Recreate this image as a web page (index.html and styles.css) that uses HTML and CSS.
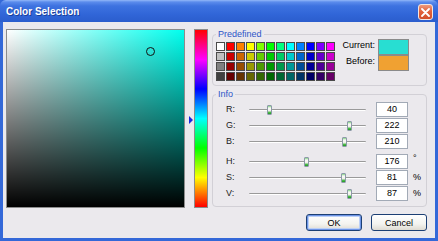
FILE: index.html
```html
<!DOCTYPE html>
<html lang="en">
<head>
	<meta charset="utf-8">
	<title>Color Selection</title>
	<link rel="stylesheet" href="styles.css">
</head>
<body>
	<div class="window">
		<div class="titlebar">
			<span class="title">Color Selection</span>
			<button class="close" aria-label="Close">
				<svg width="9" height="9" viewBox="0 0 9 9"><path d="M1 1L8 8M8 1L1 8" stroke="#fff" stroke-width="1.8" stroke-linecap="round"/></svg>
			</button>
		</div>
		<div class="client">
			<div class="sv">
				<span class="sv-cursor" style="left:81%;top:12%"></span>
			</div>
			<div class="hue">
				<div class="hue-track">
					<span class="hue-arrow" style="top:51%"></span>
				</div>
				<div class="hue-bar"></div>
			</div>
			<div class="side">
				<fieldset class="group predefined">
					<legend>Predefined</legend>
					<div class="group-body">
						<div class="palette">
							<span class="swatch" style="background:#ffffff"></span>
							<span class="swatch" style="background:#ff0000"></span>
							<span class="swatch" style="background:#ff8000"></span>
							<span class="swatch" style="background:#ffff00"></span>
							<span class="swatch" style="background:#80ff00"></span>
							<span class="swatch" style="background:#00ff00"></span>
							<span class="swatch" style="background:#00ff80"></span>
							<span class="swatch" style="background:#00ffff"></span>
							<span class="swatch" style="background:#0080ff"></span>
							<span class="swatch" style="background:#0000ff"></span>
							<span class="swatch" style="background:#8000ff"></span>
							<span class="swatch" style="background:#ff00ff"></span>

							<span class="swatch" style="background:#c0c0c0"></span>
							<span class="swatch" style="background:#cc0000"></span>
							<span class="swatch" style="background:#cc6600"></span>
							<span class="swatch" style="background:#cccc00"></span>
							<span class="swatch" style="background:#66cc00"></span>
							<span class="swatch" style="background:#00cc00"></span>
							<span class="swatch" style="background:#00cc66"></span>
							<span class="swatch" style="background:#00cccc"></span>
							<span class="swatch" style="background:#0066cc"></span>
							<span class="swatch" style="background:#0000cc"></span>
							<span class="swatch" style="background:#6600cc"></span>
							<span class="swatch" style="background:#cc00cc"></span>

							<span class="swatch" style="background:#808080"></span>
							<span class="swatch" style="background:#990000"></span>
							<span class="swatch" style="background:#994d00"></span>
							<span class="swatch" style="background:#999900"></span>
							<span class="swatch" style="background:#4d9900"></span>
							<span class="swatch" style="background:#009900"></span>
							<span class="swatch" style="background:#00994d"></span>
							<span class="swatch" style="background:#009999"></span>
							<span class="swatch" style="background:#004d99"></span>
							<span class="swatch" style="background:#000099"></span>
							<span class="swatch" style="background:#4d0099"></span>
							<span class="swatch" style="background:#990099"></span>

							<span class="swatch" style="background:#404040"></span>
							<span class="swatch" style="background:#660000"></span>
							<span class="swatch" style="background:#663300"></span>
							<span class="swatch" style="background:#666600"></span>
							<span class="swatch" style="background:#336600"></span>
							<span class="swatch" style="background:#006600"></span>
							<span class="swatch" style="background:#006633"></span>
							<span class="swatch" style="background:#006666"></span>
							<span class="swatch" style="background:#003366"></span>
							<span class="swatch" style="background:#000066"></span>
							<span class="swatch" style="background:#330066"></span>
							<span class="swatch" style="background:#660066"></span>
						</div>
						<div class="compare">
							<span class="compare-label">Current:</span>
							<span class="compare-swatch current"></span>
							<span class="compare-label">Before:</span>
							<span class="compare-swatch before"></span>
						</div>
					</div>
				</fieldset>

				<fieldset class="group info">
					<legend>Info</legend>
					<div class="channels">
						<div class="channel">
							<span class="channel-label">R:</span>
							<div class="slider"><div class="slider-range"><span class="thumb" style="left:15.7%"></span></div></div>
							<span class="value">40</span>
							<span class="unit"></span>
						</div>
						<div class="channel">
							<span class="channel-label">G:</span>
							<div class="slider"><div class="slider-range"><span class="thumb" style="left:87.1%"></span></div></div>
							<span class="value">222</span>
							<span class="unit"></span>
						</div>
						<div class="channel">
							<span class="channel-label">B:</span>
							<div class="slider"><div class="slider-range"><span class="thumb" style="left:82.4%"></span></div></div>
							<span class="value">210</span>
							<span class="unit"></span>
						</div>
					</div>
					<div class="channels">
						<div class="channel">
							<span class="channel-label">H:</span>
							<div class="slider"><div class="slider-range"><span class="thumb" style="left:48.9%"></span></div></div>
							<span class="value">176</span>
							<span class="unit unit-deg">°</span>
						</div>
						<div class="channel">
							<span class="channel-label">S:</span>
							<div class="slider"><div class="slider-range"><span class="thumb" style="left:81%"></span></div></div>
							<span class="value">81</span>
							<span class="unit">%</span>
						</div>
						<div class="channel">
							<span class="channel-label">V:</span>
							<div class="slider"><div class="slider-range"><span class="thumb" style="left:87%"></span></div></div>
							<span class="value">87</span>
							<span class="unit">%</span>
						</div>
					</div>
				</fieldset>

				<div class="actions">
					<button class="btn btn-default">OK</button>
					<button class="btn">Cancel</button>
				</div>
			</div>
		</div>
	</div>
</body>
</html>
```

FILE: styles.css
```css
html, body {
	margin: 0;
	padding: 0;
}

body {
	width: 438px;
	height: 241px;
	overflow: hidden;
	font-family: 'Liberation Sans', Arial, sans-serif;
	font-size: 9px;
	color: #000;
}

.window {
	width: 438px;
	height: 241px;
	display: flex;
	flex-direction: column;
	background: #3468d8;
}

/* title bar */
.titlebar {
	height: 22px;
	flex: none;
	display: flex;
	align-items: center;
	justify-content: space-between;
	padding: 0 5px 0 6px;
	box-sizing: border-box;
	background: linear-gradient(to bottom, #93b7f8 0, #5b8cec 2px, #3d72e0 6px, #3166d8 14px, #2b5dcd 22px);
	border-radius: 6px 6px 0 0;
}

.title {
	color: #fff;
	font-weight: bold;
	font-size: 10px;
	text-shadow: 1px 1px 0 #1b3f9a;
	margin-top: 1px;
}

.close {
	width: 15px;
	height: 16px;
	margin-top: 2px;
	padding: 0;
	display: flex;
	align-items: center;
	justify-content: center;
	border: 1px solid #f4e6e0;
	border-radius: 3px;
	background: linear-gradient(to bottom, #ef9a7c 0, #e2623c 45%, #d24e2a 100%);
}

/* client area */
.client {
	flex: 1;
	margin: 0 3px 3px;
	display: flex;
	align-items: flex-start;
	padding: 7px 8px 0 3px;
	background: #ebe9ed;
}

.sv {
	position: relative;
	width: 179px;
	height: 179px;
	box-sizing: border-box;
	border: 1px solid #8c8c8c;
	background:
		linear-gradient(to top, #000, rgba(0, 0, 0, 0)),
		linear-gradient(to right, #fff, #00ffee);
	overflow: hidden;
}

.sv-cursor {
	position: absolute;
	width: 7px;
	height: 7px;
	margin: -4px 0 0 -4px;
	border: 1px solid #111;
	border-radius: 50%;
}

.hue {
	display: flex;
	margin-left: 3px;
}

.hue-track {
	position: relative;
	width: 6px;
	height: 179px;
}

.hue-arrow {
	position: absolute;
	left: 1px;
	margin-top: -4px;
	width: 0;
	height: 0;
	border-top: 4px solid transparent;
	border-bottom: 4px solid transparent;
	border-left: 4px solid #1626e0;
}

.hue-bar {
	width: 14px;
	height: 179px;
	box-sizing: border-box;
	border: 1px solid #8c8c8c;
	background: linear-gradient(to bottom, #f00, #f0f, #00f, #0ff, #0f0, #ff0, #f00);
}

/* right column */
.side {
	width: 215px;
	margin-left: 4px;
	display: flex;
	flex-direction: column;
}

.group {
	margin: 0;
	padding: 0 0 4px 3px;
	border: 1px solid #d2d0d6;
	border-radius: 4px;
	min-width: 0;
}

.group legend {
	padding: 0 2px;
	font-size: 9px;
	line-height: 10px;
	color: #2d55c8;
}

.group-body {
	display: flex;
	align-items: flex-start;
}

.palette {
	margin-top: 3px;
	display: grid;
	grid-template-columns: repeat(12, 9px);
	grid-auto-rows: 9px;
	gap: 1px;
}

.swatch {
	box-sizing: border-box;
	border: 1px solid #4a4a4a;
}

.compare {
	margin-left: 7px;
	display: grid;
	grid-template-columns: 33px 31px;
	grid-auto-rows: 16px;
	column-gap: 3px;
}

.compare-label {
	text-align: right;
	line-height: 13px;
}

.compare-swatch {
	box-sizing: border-box;
	border: 1px solid #8a8a8a;
}

.current {
	background: rgb(40, 222, 210);
}

.before {
	background: #f0a132;
}

.info {
	margin-top: 3px;
}

.channels {
	padding: 3px 0 0 10px;
}

.channels + .channels {
	padding-top: 4px;
}

.channel {
	height: 16px;
	display: flex;
	align-items: flex-start;
}

.channel-label {
	width: 23px;
	line-height: 15px;
	color: #222;
}

.slider {
	position: relative;
	width: 117px;
	height: 15px;
}

.slider::before {
	content: "";
	position: absolute;
	left: 0;
	right: 0;
	top: 7px;
	height: 1px;
	background: #9a9a9a;
	border-bottom: 1px solid #fff;
	border-radius: 1px;
}

.slider-range {
	position: absolute;
	left: 2px;
	right: 2px;
	top: 0;
	bottom: 0;
}

.thumb {
	position: absolute;
	top: 3px;
	margin-left: -2px;
	width: 5px;
	height: 10px;
	box-sizing: border-box;
	border: 1px solid #8d9aa8;
	border-radius: 1px;
	background: linear-gradient(to bottom, #7fd17f 0, #fbfbf8 2px, #eeeee8 5px, #57c057 6px, #229b22 100%);
}

.value {
	width: 32px;
	height: 15px;
	box-sizing: border-box;
	margin-left: 10px;
	border: 1px solid #a2aab6;
	background: #fff;
	text-align: center;
	line-height: 13px;
}

.unit {
	margin-left: 5px;
	line-height: 15px;
}

.unit-deg {
	line-height: 9px;
}

.actions {
	margin-top: 7px;
	display: flex;
	justify-content: flex-end;
	gap: 9px;
}

.btn {
	width: 56px;
	height: 17px;
	padding: 0;
	font-family: inherit;
	font-size: 9px;
	color: #000;
	border: 1px solid #1c3f74;
	border-radius: 3px;
	background: linear-gradient(to bottom, #ffffff 0, #f3f3ef 60%, #dedbd2 100%);
}

.btn-default {
	box-shadow: inset 0 0 0 1px #6d94e6, inset 0 0 0 2px #bcd0f6;
}
```
